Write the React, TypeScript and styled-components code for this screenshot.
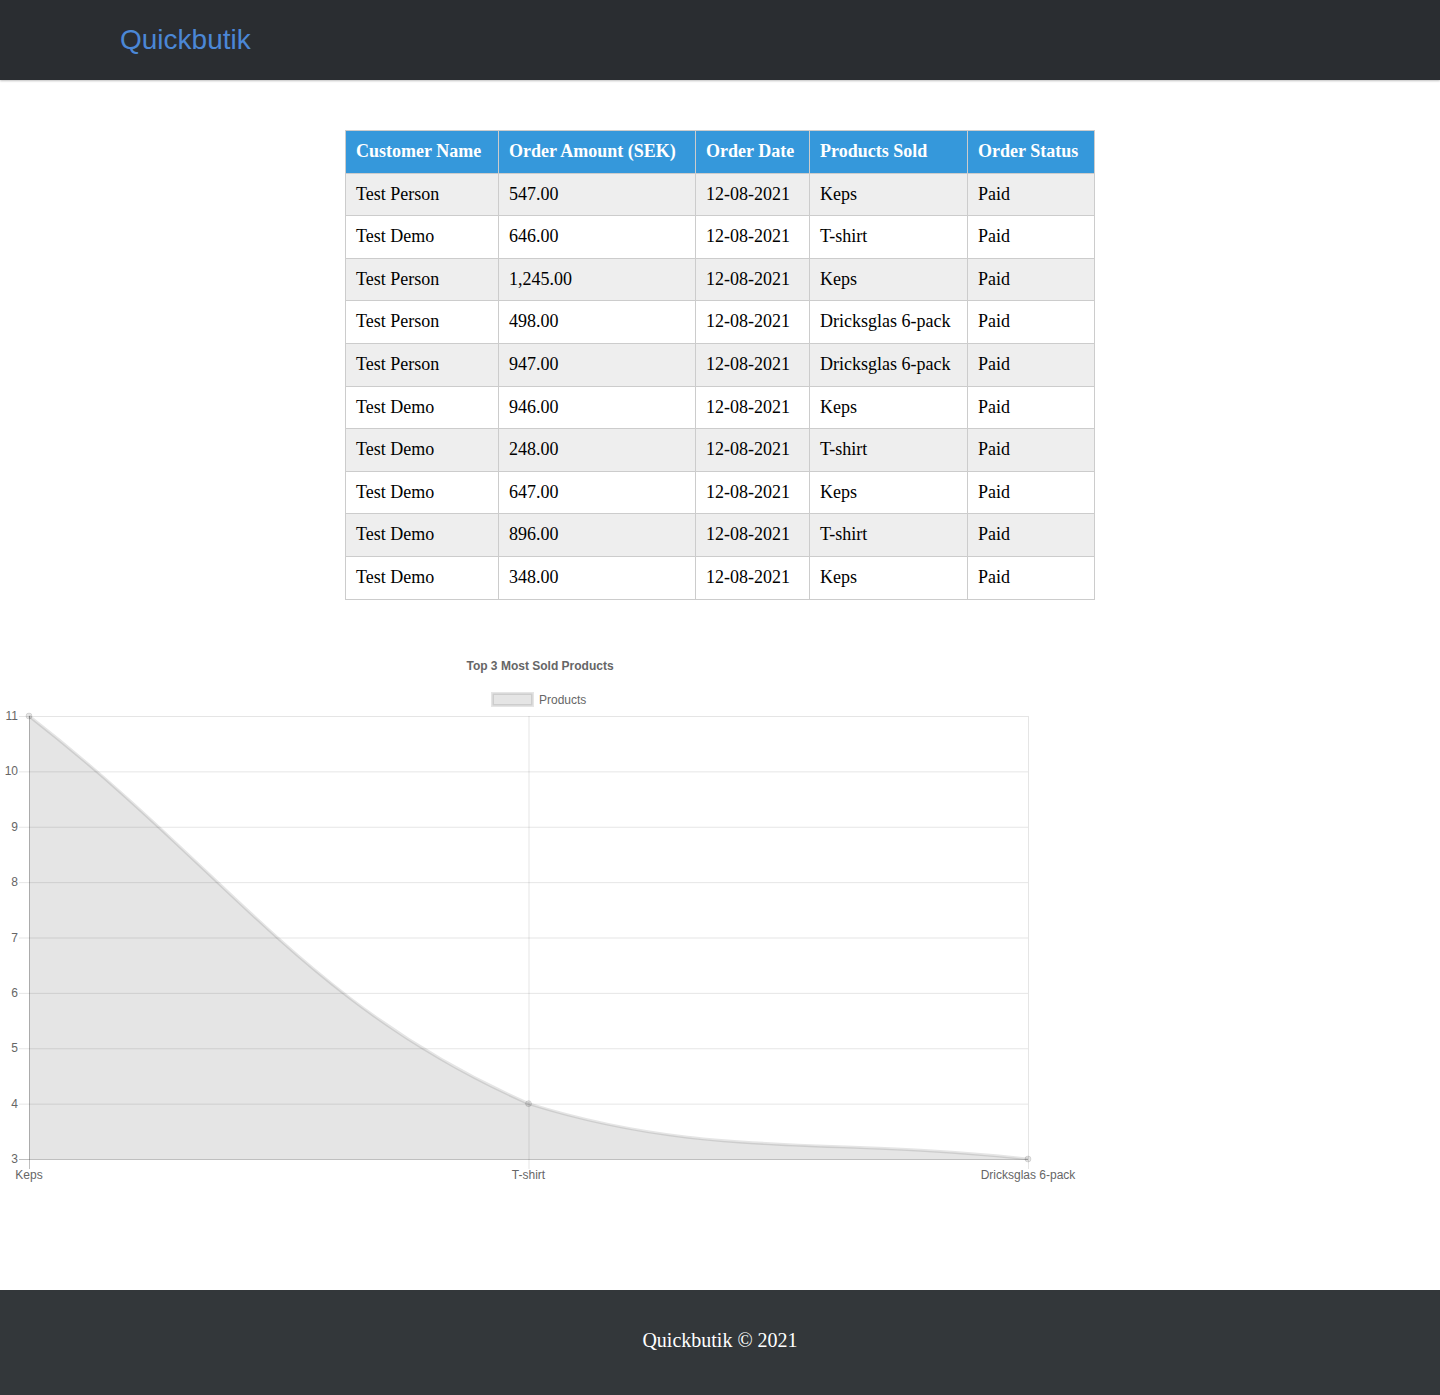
import React from "react";
import styled, { createGlobalStyle } from "styled-components";

const GlobalStyle = createGlobalStyle`
  html, body { margin: 0; padding: 0; background: #ffffff; }
  body { font-family: "Liberation Serif", "Times New Roman", serif; }
`;

const Page = styled.div`
  display: flex;
  flex-direction: column;
  min-height: 1395px;
`;

const Header = styled.header`
  height: 80px;
  background: #2a2d31;
  box-shadow: 0 1px 2px rgba(0, 0, 0, 0.25);
  display: flex;
  align-items: center;
  padding-left: 120px;
`;

const Brand = styled.h1`
  margin: 0;
  font-family: "Liberation Sans", Arial, sans-serif;
  font-weight: 400;
  font-size: 28px;
  color: #4b87d6;
`;

const Main = styled.main`
  flex: 1;
  display: flex;
  flex-direction: column;
  padding-top: 50px;
  padding-bottom: 100px;
`;

const TableWrap = styled.div`
  display: flex;
  justify-content: center;
`;

const Table = styled.table`
  border-collapse: collapse;
  table-layout: fixed;
  width: 749px;
  font-family: "Liberation Serif", "Times New Roman", serif;
  font-size: 18px;
`;

const Th = styled.th`
  background: #3598db;
  color: #ffffff;
  font-weight: 700;
  text-align: left;
  padding: 10px;
  line-height: 21.6px;
  border: 1px solid #cccccc;
  white-space: nowrap;
`;

const Row = styled.tr<{ $shade: boolean }>`
  background: ${(p) => (p.$shade ? "#eeeeee" : "#ffffff")};
`;

const Td = styled.td`
  padding: 10px;
  line-height: 21.6px;
  border: 1px solid #cccccc;
  color: #000000;
  white-space: nowrap;
`;

const ChartBox = styled.div`
  margin-top: 50px;
  width: 1080px;
  height: 540px;
`;

const Footer = styled.footer`
  height: 105px;
  box-sizing: border-box;
  padding-bottom: 5px;
  background: #33373a;
  display: flex;
  align-items: center;
  justify-content: center;
  color: #ffffff;
  font-family: "Liberation Serif", "Times New Roman", serif;
  font-size: 20px;
`;

const cols = [153, 197, 114, 158, 127];
const headers = ["Customer Name", "Order Amount (SEK)", "Order Date", "Products Sold", "Order Status"];
const rows: [string, string, string, string, string][] = [
  ["Test Person", "547.00", "12-08-2021", "Keps", "Paid"],
  ["Test Demo", "646.00", "12-08-2021", "T-shirt", "Paid"],
  ["Test Person", "1,245.00", "12-08-2021", "Keps", "Paid"],
  ["Test Person", "498.00", "12-08-2021", "Dricksglas 6-pack", "Paid"],
  ["Test Person", "947.00", "12-08-2021", "Dricksglas 6-pack", "Paid"],
  ["Test Demo", "946.00", "12-08-2021", "Keps", "Paid"],
  ["Test Demo", "248.00", "12-08-2021", "T-shirt", "Paid"],
  ["Test Demo", "647.00", "12-08-2021", "Keps", "Paid"],
  ["Test Demo", "896.00", "12-08-2021", "T-shirt", "Paid"],
  ["Test Demo", "348.00", "12-08-2021", "Keps", "Paid"],
];

const Chart: React.FC = () => {
  const left = 29;
  const right = 1028;
  const top = 66;
  const bottom = 509;
  const unit = (bottom - top) / 8;
  const yOf = (v: number) => bottom - (v - 3) * unit;
  const ticks = [11, 10, 9, 8, 7, 6, 5, 4, 3];
  const xs = [left, (left + right) / 2, right];
  const labels = ["Keps", "T-shirt", "Dricksglas 6-pack"];
  const vals = [11, 4, 3];
  const pts = xs.map((x, i) => [x, yOf(vals[i])]);
  const curve = `M${pts[0][0]},${pts[0][1]} C228.8,221.2 305.8,355.3 ${pts[1][0]},${pts[1][1]} C705.4,509 828.2,487 ${pts[2][0]},${pts[2][1]}`;
  const area = `${curve} L${right},${bottom} L${left},${bottom} Z`;
  const font = "'Liberation Sans', Arial, Helvetica, sans-serif";
  return (
    <svg width={1080} height={540} viewBox="0 0 1080 540">
      <text x={540} y={20} textAnchor="middle" fontFamily={font} fontSize={12} fontWeight={700} fill="#666">
        Top 3 Most Sold Products
      </text>
      <rect x={492.5} y={43.5} width={40} height={12} fill="rgba(0,0,0,0.1)" stroke="rgba(0,0,0,0.1)" strokeWidth={3} />
      <text x={539} y={53.5} fontFamily={font} fontSize={12} fill="#666">
        Products
      </text>
      {ticks.map((t) => (
        <g key={t}>
          <line
            x1={19}
            x2={right}
            y1={yOf(t) + 0.5}
            y2={yOf(t) + 0.5}
            stroke={t === 3 ? "rgba(0,0,0,0.25)" : "rgba(0,0,0,0.1)"}
            strokeWidth={1}
          />
          <text x={18} y={yOf(t) + 4} textAnchor="end" fontFamily={font} fontSize={12} fill="#666">
            {t}
          </text>
        </g>
      ))}
      {xs.map((x, i) => (
        <g key={labels[i]}>
          <line
            x1={x + 0.5}
            x2={x + 0.5}
            y1={top}
            y2={bottom + 10}
            stroke={i === 0 ? "rgba(0,0,0,0.25)" : "rgba(0,0,0,0.1)"}
            strokeWidth={1}
          />
          <text x={x} y={529} textAnchor="middle" fontFamily={font} fontSize={12} fill="#666">
            {labels[i]}
          </text>
        </g>
      ))}
      <path d={area} fill="rgba(0,0,0,0.1)" />
      <path d={curve} fill="none" stroke="rgba(0,0,0,0.1)" strokeWidth={3} />
      {pts.map((p, i) => (
        <circle key={i} cx={p[0]} cy={p[1]} r={3} fill="rgba(0,0,0,0.1)" stroke="rgba(0,0,0,0.1)" strokeWidth={1} />
      ))}
    </svg>
  );
};

export default function App() {
  return (
    <Page>
      <GlobalStyle />
      <Header>
        <Brand>Quickbutik</Brand>
      </Header>
      <Main>
        <TableWrap>
          <Table>
            <colgroup>
              {cols.map((w, i) => (
                <col key={i} style={{ width: w }} />
              ))}
            </colgroup>
            <thead>
              <tr>
                {headers.map((h) => (
                  <Th key={h}>{h}</Th>
                ))}
              </tr>
            </thead>
            <tbody>
              {rows.map((r, i) => (
                <Row key={i} $shade={i % 2 === 0}>
                  {r.map((c, j) => (
                    <Td key={j}>{c}</Td>
                  ))}
                </Row>
              ))}
            </tbody>
          </Table>
        </TableWrap>
        <ChartBox>
          <Chart />
        </ChartBox>
      </Main>
      <Footer>Quickbutik © 2021</Footer>
    </Page>
  );
}
